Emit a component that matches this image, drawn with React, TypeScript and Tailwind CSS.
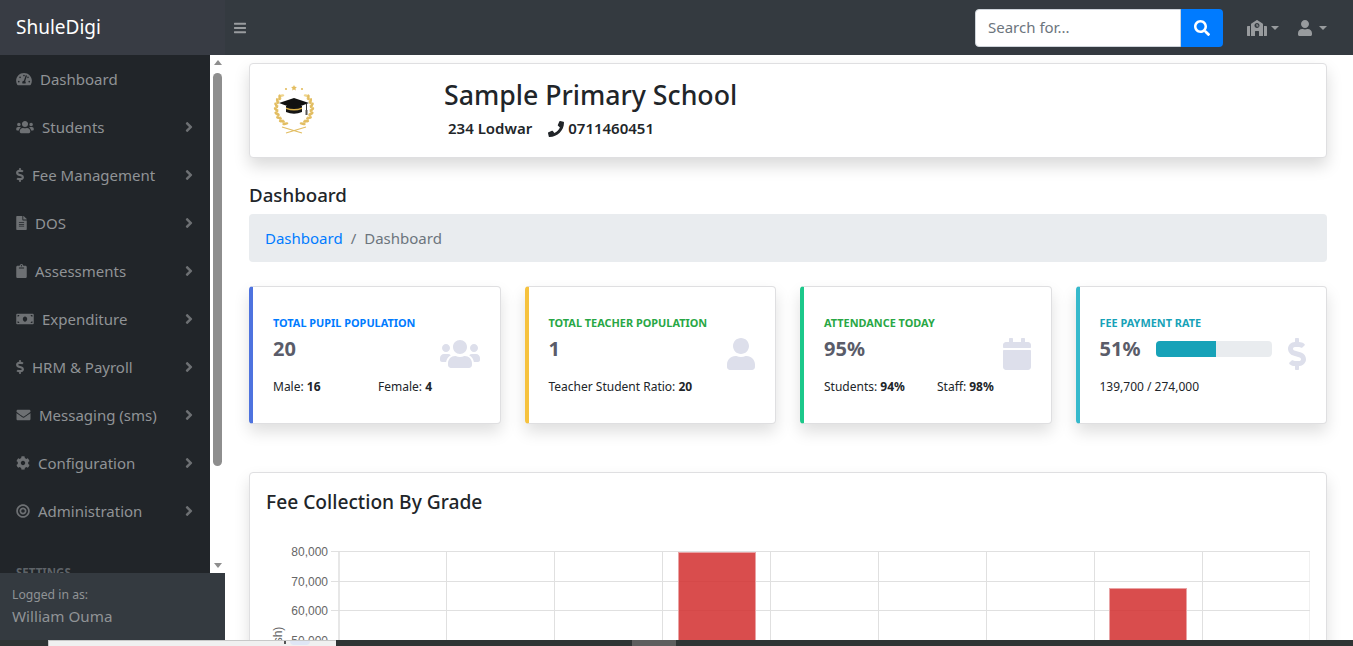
import { FaAngleRight, FaBars, FaBullseye, FaCalendar, FaClipboard, FaCog, FaDollarSign, FaEnvelope, FaFileAlt, FaMoneyBill, FaPhone, FaSchool, FaSearch, FaTachometerAlt, FaUser, FaUsers } from "react-icons/fa";

const menu = [
  { icon: FaTachometerAlt, width: "w-[16px]", label: "Dashboard", arrow: false },
  { icon: FaUsers, width: "w-[18px]", label: "Students", arrow: true },
  { icon: FaDollarSign, width: "w-[8px]", label: "Fee Management", arrow: true },
  { icon: FaFileAlt, width: "w-[11px]", label: "DOS", arrow: true },
  { icon: FaClipboard, width: "w-[11px]", label: "Assessments", arrow: true },
  { icon: FaMoneyBill, width: "w-[18px]", label: "Expenditure", arrow: true },
  { icon: FaDollarSign, width: "w-[8px]", label: "HRM & Payroll", arrow: true },
  { icon: FaEnvelope, width: "w-[15px]", label: "Messaging (sms)", arrow: true },
  { icon: FaCog, width: "w-[14px]", label: "Configuration", arrow: true },
  { icon: FaBullseye, width: "w-[14px]", label: "Administration", arrow: true },
];

const Caret = ({ className }: { className: string }) => (
  <span className={`inline-block h-0 w-0 border-x-[4px] border-t-[4px] border-x-transparent border-t-[#989b9e] ${className}`} />
);

const Logo = () => {
  const leaves = [0, 1, 2, 3, 4, 5, 6, 7];
  return (
    <svg width="50" height="50" viewBox="0 0 50 50">
      {[-1, 1].map((side) => (
        <g key={side}>
          {leaves.map((i) => {
            const deg = 32 + i * 14;
            const a = (deg * Math.PI) / 180;
            const x = 25 + side * 21 * Math.sin(a);
            const y = 24 + 21 * Math.cos(a);
            return (
              <g key={i} transform={`translate(${x} ${y}) rotate(${-side * deg})`}>
                <ellipse cx={side * 3.2} cy="-1.6" rx="3.1" ry="1.25" fill="#efd58f" transform={`rotate(${side * -42})`} />
                <ellipse cx={side * -2.8} cy="-1.6" rx="3.1" ry="1.25" fill="#e2bd62" transform={`rotate(${side * 42})`} />
              </g>
            );
          })}
        </g>
      ))}
      <path d="M13 43 L33 49 M37 43 L17 49" stroke="#e2bd62" strokeWidth="1.3" />
      <path d="M25 1 l.9 1.8 2 .3 -1.4 1.4 .3 2 -1.8 -1 -1.8 1 .3 -2 -1.4 -1.4 2 -.3z" fill="#e3bd5f" />
      <circle cx="17" cy="5" r="1.1" fill="#e3bd5f" />
      <circle cx="33" cy="5" r="1.1" fill="#e3bd5f" />
      <path d="M17 22 v6 q8 3.5 16 0 v-6z" fill="#151515" />
      <path d="M17 23.5 q8 3 16 0 v1.4 q-8 3 -16 0z" fill="#d9ae45" />
      <path d="M10 19 L25 14 L40 19 L25 24.5z" fill="#111" />
      <path d="M37.5 20 v7" stroke="#333" strokeWidth="1" />
      <rect x="36.5" y="26" width="2" height="5" fill="#555" />
    </svg>
  );
};

const gridX = [73, 180.5, 288.5, 396.5, 504.5, 612.5, 720.5, 828.5, 936.5, 1044];
const gridY = [
  { y: 11.5, label: "80,000" },
  { y: 41.5, label: "70,000" },
  { y: 70.5, label: "60,000" },
  { y: 100.5, label: "50,000" },
];

const Chart = () => (
  <svg width="1044" height="110" viewBox="0 0 1044 110" className="mt-[24px] block">
    {gridX.map((x) => (
      <line key={x} x1={x} x2={x} y1="11" y2="110" stroke={x === 73 ? "#cfcfcf" : "#e0e0e0"} />
    ))}
    {gridY.map((g) => (
      <g key={g.label}>
        <line x1="65" x2="1044" y1={g.y} y2={g.y} stroke="#e0e0e0" />
        <text x="62" y={g.y + 4} textAnchor="end" fontSize="12" fill="#666" fontFamily="Liberation Sans, Arial, sans-serif">
          {g.label}
        </text>
      </g>
    ))}
    <rect x="412.5" y="12.5" width="77" height="100" fill="#d22e2e" fillOpacity="0.85" stroke="#e9a3a5" />
    <rect x="843.5" y="48.5" width="77" height="70" fill="#d22e2e" fillOpacity="0.85" stroke="#e9a3a5" />
    <text transform="translate(16 160) rotate(-90)" fontSize="12" fill="#666" fontFamily="Liberation Sans, Arial, sans-serif">
      Amount (Ksh)
    </text>
  </svg>
);

const StatCard = ({ accent, title, titleColor, icon: Icon, iconWidth, children }: { accent: string; title: string; titleColor: string; icon: typeof FaUsers; iconWidth: string; children: React.ReactNode }) => (
  <div className={`flex h-[138px] items-center justify-between rounded border border-[#dfdfe1] border-l-4 bg-white pr-5 pl-5 shadow-[0_8px_16px_rgba(0,0,0,0.13)] ${accent}`}>
    <div className="flex-1">
      <div className={`mb-[3px] text-[10.9px] leading-[17px] font-bold uppercase ${titleColor}`}>{title}</div>
      {children}
    </div>
    <Icon className={`mb-[2px] h-8 shrink-0 text-[#dddfeb] ${iconWidth}`} />
  </div>
);

const Value = ({ children }: { children: React.ReactNode }) => (
  <div className="text-[20px] leading-[30px] font-bold text-[#5a5c69]">{children}</div>
);

export default function App() {
  return (
    <div className="flex h-screen flex-col overflow-hidden bg-white font-['Noto_Sans',sans-serif] text-[#212529]">
      <header className="flex h-[55px] shrink-0 items-center bg-[#343a40] pr-[26px]">
        <div className="flex h-full w-[225px] items-center bg-[#383c44] pl-4 text-[19px] text-white">ShuleDigi</div>
        <FaBars className="ml-[9px] h-[14px] w-3 text-[#999c9f]" />
        <div className="ml-auto flex h-[38px] w-[248px]">
          <div className="flex flex-1 items-center rounded-l border border-[#ced4da] bg-white pl-3 text-[15px] text-[#6c757d]">Search for...</div>
          <div className="flex w-[42px] items-center justify-center rounded-r bg-[#007bff]">
            <FaSearch className="size-4 text-white" />
          </div>
        </div>
        <div className="ml-6 flex items-center text-[#989b9e]">
          <FaSchool className="h-4 w-5" />
          <Caret className="ml-1" />
        </div>
        <div className="ml-[19px] flex items-center text-[#989b9e]">
          <FaUser className="h-4 w-[14px]" />
          <Caret className="ml-[7px]" />
        </div>
      </header>

      <div className="flex min-h-0 flex-1">
        <aside className="flex w-[225px] shrink-0 flex-col">
          <div className="flex min-h-0 flex-1">
            <nav className="w-[210px] overflow-hidden bg-[#212529] text-[15px] text-[#909396]">
              {menu.map((item) => (
                <div key={item.label} className="flex h-12 items-center pr-[13px] pl-4">
                  <item.icon className={`mr-2 h-[14px] shrink-0 text-[#6d7073] ${item.width}`} />
                  <span>{item.label}</span>
                  {item.arrow && <FaAngleRight className="ml-auto size-4 text-[#6d7073]" />}
                </div>
              ))}
              <div className="mt-[29px] pl-4 text-[11.5px] font-bold text-[#5e6368]">SETTINGS</div>
            </nav>
            <div className="flex w-[15px] flex-col items-center bg-white pt-[5px]">
              <span className="h-0 w-0 border-x-[4px] border-b-[5px] border-x-transparent border-b-[#8e8e8e]" />
              <div className="mt-[8px] h-[393px] w-[9px] rounded-[5px] bg-[#8e8e8e]" />
              <span className="mt-auto mb-[5px] h-0 w-0 border-x-[4px] border-t-[5px] border-x-transparent border-t-[#8e8e8e]" />
            </div>
          </div>
          <div className="h-[67px] shrink-0 bg-[#343a40] pt-3 pl-3 text-[#909396]">
            <div className="text-[12.2px] leading-5">Logged in as:</div>
            <div className="text-[15.2px] leading-[22px]">William Ouma</div>
          </div>
        </aside>

        <main className="min-w-0 flex-1 overflow-hidden pt-2 pr-[26px] pl-6">
          <section className="flex h-[95px] items-center rounded border border-[#dfdfe1] bg-white pl-[19px] shadow-[0_8px_16px_rgba(0,0,0,0.15)]">
            <div className="mb-1 w-[175px] shrink-0">
              <Logo />
            </div>
            <div className="mb-[3px]">
              <h1 className="text-[26.7px] leading-[34px] font-medium">Sample Primary School</h1>
              <div className="mt-[5px] ml-1 flex items-center text-[15px] font-semibold">
                <span>234 Lodwar</span>
                <FaPhone className="mr-1 ml-4 size-4" />
                <span>0711460451</span>
              </div>
            </div>
          </section>

          <h2 className="mt-[23px] text-[18.7px] leading-[28px] font-medium">Dashboard</h2>
          <div className="mt-[5px] flex h-12 items-center rounded bg-[#e9ecef] px-4 text-[15px]">
            <span className="text-[#007bff]">Dashboard</span>
            <span className="px-2 text-[#6c757d]">/</span>
            <span className="text-[#6c757d]">Dashboard</span>
          </div>

          <div className="mt-6 grid grid-cols-4 gap-6">
            <StatCard accent="border-l-[#4e73df]" title="Total Pupil Population" titleColor="text-[#007bff]" icon={FaUsers} iconWidth="w-10">
              <Value>20</Value>
              <div className="mt-[14px] flex text-[12px] leading-[18px]">
                <span className="w-[105px]">Male: <b>16</b></span>
                <span>Female: <b>4</b></span>
              </div>
            </StatCard>
            <StatCard accent="border-l-[#f6c23e]" title="Total Teacher Population" titleColor="text-[#28a745]" icon={FaUser} iconWidth="w-7">
              <Value>1</Value>
              <div className="mt-[14px] text-[12px] leading-[18px]">Teacher Student Ratio: <b>20</b></div>
            </StatCard>
            <StatCard accent="border-l-[#1cc88a]" title="Attendance Today" titleColor="text-[#28a745]" icon={FaCalendar} iconWidth="w-7">
              <Value>95%</Value>
              <div className="mt-[14px] flex text-[12px] leading-[18px]">
                <span className="w-[113px]">Students: <b>94%</b></span>
                <span>Staff: <b>98%</b></span>
              </div>
            </StatCard>
            <StatCard accent="border-l-[#36b9cc]" title="Fee Payment Rate" titleColor="text-[#17a2b8]" icon={FaDollarSign} iconWidth="w-[18px]">
              <div className="flex items-center">
                <Value>51%</Value>
                <div className="ml-4 h-4 w-[116px] overflow-hidden rounded bg-[#e9ecef]">
                  <div className="h-full bg-[#17a2b8]" style={{ width: "51%" }} />
                </div>
              </div>
              <div className="mt-[14px] text-[12px] leading-[18px]">139,700 / 274,000</div>
            </StatCard>
          </div>

          <section className="mt-12 rounded border border-[#dfdfe1] bg-white px-4 pt-[15px] pb-4 shadow-[0_8px_16px_rgba(0,0,0,0.13)]">
            <h3 className="text-[19.2px] leading-[28px] font-medium">Fee Collection By Grade</h3>
            <Chart />
          </section>
        </main>
      </div>

      <footer className="flex h-[6px] shrink-0 bg-[#2f3434]">
        <div className="ml-12 flex w-[288px] border-t border-l border-[#c8c8c8] bg-[#f0f0f0]">
          <span className="ml-[235px] h-[3px] w-[2px] bg-[#555]" />
          <span className="ml-1 h-[4px] w-5 rounded-b-full bg-[#dfe6f5]" />
        </div>
        <div className="ml-[296px] w-[44px] bg-[#5e5e5e]" />
      </footer>
    </div>
  );
}
